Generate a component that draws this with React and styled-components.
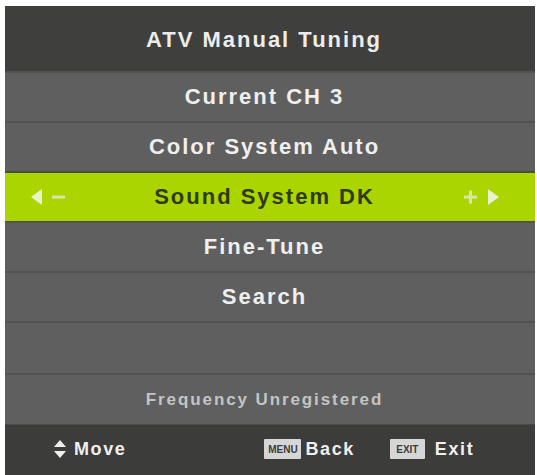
import React from "react";
import styled, { createGlobalStyle } from "styled-components";

const Global = createGlobalStyle`
  html, body { margin: 0; padding: 0; background: #ffffff; }
  body { font-family: "Liberation Sans", Arial, sans-serif; }
`;

const Screen = styled.div`
  width: 537px;
  height: 475px;
  box-sizing: border-box;
  padding: 6px 2px 0 5px;
`;

const Panel = styled.div`
  height: 100%;
  display: flex;
  flex-direction: column;
  background: #5e5e5e;
`;

const Header = styled.div`
  height: 65px;
  display: flex;
  align-items: center;
  justify-content: center;
  padding: 2px 12px 0 0;
  box-sizing: border-box;
  background: #3f3f3d;
  color: #ececec;
  font-size: 22px;
  font-weight: bold;
  letter-spacing: 2px;
`;

const Row = styled.div`
  height: ${(p) => p.h || 50}px;
  box-sizing: border-box;
  display: flex;
  align-items: center;
  justify-content: space-between;
  padding: 0 33px 0 22px;
  background: ${(p) => (p.active ? "#abd500" : "#5f5f5f")};
  border-top: 2px solid ${(p) => (p.active ? "#4a4f3a" : "#525252")};
  color: ${(p) => (p.active ? "#2f3a10" : p.dim ? "#c4c4c4" : "#efefef")};
  font-size: ${(p) => (p.dim ? 17 : 22)}px;
  font-weight: bold;
  letter-spacing: ${(p) => (p.dim ? 1.9 : 2)}px;
`;

const Label = styled.span`
  flex: 1;
  text-align: center;
`;

const Side = styled.span`
  width: 40px;
  display: flex;
  align-items: center;
  justify-content: ${(p) => (p.right ? "flex-end" : "flex-start")};
`;

const Footer = styled.div`
  flex: 1;
  display: flex;
  align-items: center;
  background: #3c3c3b;
  border-top: 1px solid #4b4b4b;
  color: #efefef;
  font-size: 18px;
  font-weight: bold;
  letter-spacing: 1.6px;
  padding: 0 0 2px 48px;
`;

const Hint = styled.span`
  display: flex;
  align-items: center;
  gap: ${(p) => p.gap || 5}px;
  margin-left: ${(p) => p.ml || 0}px;
`;

const Key = styled.span`
  display: inline-flex;
  align-items: center;
  justify-content: center;
  width: ${(p) => p.w}px;
  height: 20px;
  background: #d6d6d6;
  color: #3c3c3b;
  font-size: 10px;
  font-weight: bold;
  letter-spacing: 0;
  border-radius: 1px;
`;

const LeftArrows = () => (
  <svg width="40" height="18" viewBox="0 0 40 18">
    <polygon points="4,9 15,1 15,17" fill="#e8f2cc" />
    <rect x="25" y="7.6" width="13" height="3" fill="#d8e6a8" />
  </svg>
);

const RightArrows = () => (
  <svg width="40" height="18" viewBox="0 0 40 18">
    <rect x="2" y="7.6" width="13" height="3" fill="#d8e6a8" />
    <rect x="7" y="2.6" width="3" height="13" fill="#d8e6a8" />
    <polygon points="37,9 26,1 26,17" fill="#e8f2cc" />
  </svg>
);

const UpDown = () => (
  <svg width="14" height="20" viewBox="0 0 14 20">
    <polygon points="7,1 13,8 1,8" fill="#efefef" />
    <polygon points="7,19 13,12 1,12" fill="#efefef" />
  </svg>
);

const rows = ["Current CH 3", "Color System Auto"];
const rowsAfter = ["Fine-Tune", "Search", ""];

export default function App() {
  return (
    <Screen>
      <Global />
      <Panel>
        <Header>ATV Manual Tuning</Header>
        {rows.map((r) => (
          <Row key={r}>
            <Side />
            <Label>{r}</Label>
            <Side right />
          </Row>
        ))}
        <Row active>
          <Side>
            <LeftArrows />
          </Side>
          <Label>Sound System DK</Label>
          <Side right>
            <RightArrows />
          </Side>
        </Row>
        {rowsAfter.map((r, i) => (
          <Row key={i} h={i === 2 ? 52 : 50}>
            <Side />
            <Label>{r}</Label>
            <Side right />
          </Row>
        ))}
        <Row dim h={51}>
          <Side />
          <Label>Frequency Unregistered</Label>
          <Side right />
        </Row>
        <Footer>
          <Hint gap={7}>
            <UpDown />
            Move
          </Hint>
          <Hint ml={138} gap={4}>
            <Key w={37}>MENU</Key>
            Back
          </Hint>
          <Hint ml={35} gap={10}>
            <Key w={35}>EXIT</Key>
            Exit
          </Hint>
        </Footer>
      </Panel>
    </Screen>
  );
}
